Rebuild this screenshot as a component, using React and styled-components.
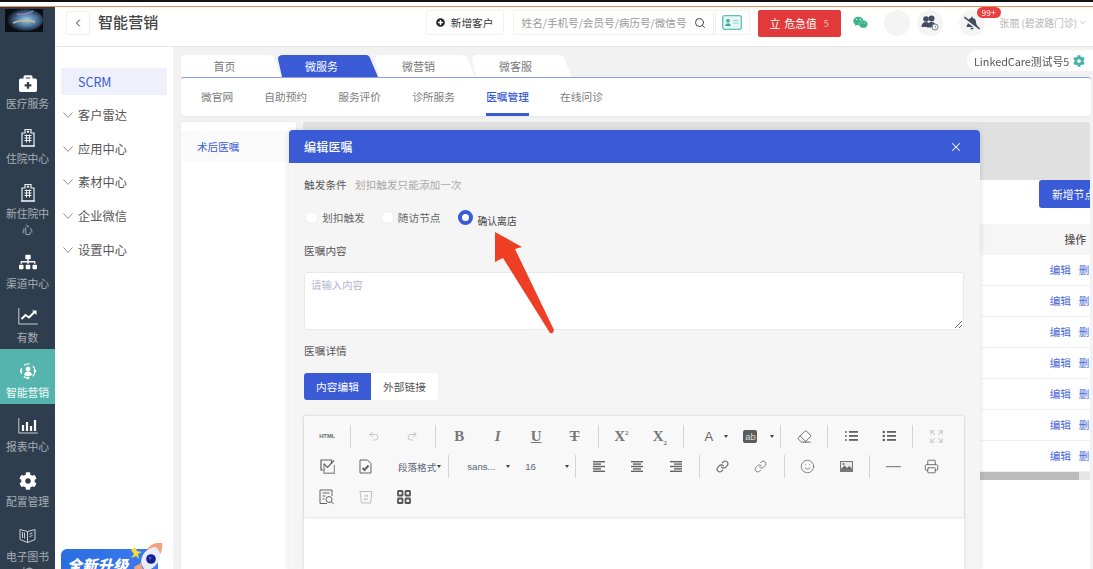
import React from 'react';
import styled, { createGlobalStyle } from 'styled-components';
import {
  Undo2, Redo2, Eraser, Expand, Link as LinkIcon, Smile, Printer, Search, ChevronLeft, ChevronDown, X,
} from 'lucide-react';
import {
  FaBriefcaseMedical, FaSitemap, FaCog, FaPlusCircle, FaWeixin, FaBellSlash,
} from 'react-icons/fa';

const FONT = `"Noto Sans CJK SC", "Noto Sans", sans-serif`;
const BLUE = '#3a5ad6';

const Global = createGlobalStyle`
  html, body { margin: 0; padding: 0; width: 1093px; height: 569px; overflow: hidden; background: #fff; }
  body { font-family: ${FONT}; }
  * { box-sizing: border-box; }
`;

const Screen = styled.div`
  position: relative; width: 1093px; height: 569px; display: flex; flex-direction: column; overflow: hidden;
  filter: blur(.35px);
`;
const TopEdge = styled.div`
  flex: 0 0 7px; background: #fff; border-top: 2px solid #111; border-bottom: 1.5px solid #e98d52;
`;
const Frame = styled.div`
  flex: 1; min-height: 0; display: flex;
`;

/* left rail */
const Rail = styled.nav`
  flex: 0 0 55px; background: #2f3e4e; display: flex; flex-direction: column; overflow: hidden;
`;
const LogoBox = styled.div`
  flex: 0 0 54px; padding: 2px 0 0 5px;
`;
const RailItem = styled.div`
  flex: 0 0 auto; min-height: ${p => p.$h || 54.6}px; padding-top: 13px;
  display: flex; flex-direction: column; align-items: center;
  background: ${p => (p.$active ? '#55b5ae' : 'transparent')};
  color: ${p => (p.$active ? '#f2fbfa' : '#a6afb8')};
`;
const RailIcon = styled.div`
  height: 18px; display: flex; align-items: center; justify-content: center; color: #fff; font-size: 18px;
`;
const RailLabel = styled.div`
  margin-top: 3.4px; font-size: 10.8px; line-height: 16px; text-align: center; width: 46px; word-break: break-all;
`;

/* right side */
const Main = styled.div`
  flex: 1; min-width: 0; display: flex; flex-direction: column; background: #f2f2f2;
`;
const Header = styled.header`
  flex: 0 0 39px; background: #fff; display: flex; align-items: center; padding: 0 6px 8px 11px;
  box-shadow: 0 1px 1px rgba(0,0,0,.04);
`;
const BackButton = styled.button`
  width: 24px; height: 24px; padding: 0; background: #fff; border: 1px solid #f0f0f0; border-radius: 2px;
  display: flex; align-items: center; justify-content: center; color: #333;
`;
const Title = styled.h1`
  margin: 0 0 2px 8px; font-size: 15px; line-height: 22px; font-weight: 500; color: #444; letter-spacing: .1px;
`;
const HeaderTools = styled.div`
  margin-left: auto; display: flex; align-items: center;
`;
const AddButton = styled.button`
  width: 78px; height: 25px; padding: 0; background: #fff; border: 1px solid #f2f2f2; border-radius: 2px;
  display: flex; align-items: center; justify-content: center; gap: 6px;
  font: 400 10.7px ${FONT}; color: #333;
`;
const SearchBox = styled.div`
  margin-left: 9px; width: 201px; height: 25px; background: #fff; border: 1px solid #f2f2f2;
  display: flex; align-items: center; justify-content: space-between; padding: 0 7px 0 8px;
  font-size: 10.6px; color: #9a9a9a; white-space: nowrap;
`;
const CardButton = styled.div`
  margin-left: 1px; width: 35px; height: 25px; background: #fff; border: 1px solid #f2f2f2;
  display: flex; align-items: center; justify-content: center;
`;
const AlertButton = styled.button`
  margin: 1px 0 0 8px; width: 83px; height: 27px; padding: 0; background: #e23a3a; border: 0; border-radius: 2px; color: #fff;
  display: flex; align-items: center; justify-content: center; font: 400 10.8px ${FONT};
`;
const AlertMark = styled.span`
  margin-right: 4px; font-size: 11px;
`;
const AlertCount = styled.span`
  margin-left: 7px; font-size: 9px; color: #f7c9c9;
`;
const WeChat = styled.div`
  margin-left: 12px; width: 15px; color: #37b48a; font-size: 15px; display: flex;
`;
const Circle = styled.div`
  position: relative; margin-left: ${p => p.$gap}px; width: 26px; height: 26px; border-radius: 50%; background: #f4f4f4;
  display: flex; align-items: center; justify-content: center; color: #434e5e; font-size: ${p => p.$size || 13}px;
`;
const Badge = styled.span`
  position: absolute; left: 18px; top: -3px; width: 24px; height: 11px; border-radius: 6px; background: #e84040; color: #fff;
  font-size: 8.4px; line-height: 11px; text-align: center;
`;
const UserName = styled.div`
  margin-left: 15px; font-size: 9.8px; color: #b5b5b5; display: flex; align-items: center; gap: 1px; white-space: nowrap;
`;

const Body = styled.div`
  flex: 1; min-height: 0; display: flex; margin-top: 1px;
`;
const SubNav = styled.aside`
  flex: 0 0 118px; background: #fff; padding: 21px 6px 0; display: flex; flex-direction: column; overflow: visible;
`;
const ScrmItem = styled.div`
  height: 27px; background: #eef1fb; color: ${BLUE}; font-size: 12.5px; line-height: 27px; padding-left: 17px; margin-bottom: 3px;
`;
const SubItem = styled.div`
  height: 33.8px; display: flex; align-items: center; gap: 5px; padding-left: 2px; color: #555; font-size: 12.2px; letter-spacing: .1px;
`;
const Promo = styled.div`
  position: relative; flex: 0 0 30px; margin: auto 9px -12px 0; background: linear-gradient(90deg, #2a6de0, #3c7cf0); border-radius: 6px;
  color: #fff; font-weight: 900; font-style: italic; font-size: 15px; line-height: 32px; padding-left: 6px; letter-spacing: .3px;
`;
const Rocket = styled.svg`
  position: absolute; right: -7px; top: -6px;
`;

const Content = styled.div`
  position: relative; flex: 1; min-width: 0; padding: 8px 3px 0 8px; display: flex; flex-direction: column;
`;
const TabRow = styled.div`
  flex: 0 0 22px; display: flex;
`;
const Tab = styled.div`
  flex: 0 0 100px; height: 22px; margin-right: -3px; text-align: center; padding-right: 13px;
  font-size: 11px; line-height: 22px;
  color: ${p => (p.$active ? '#fff' : '#777')};
  background: ${p => (p.$active ? BLUE : '#fff')};
  clip-path: ${p => (p.$first
    ? `path('M0 4 Q0 0 4 0 H89 Q92 0 93 3 L100 22 H0 Z')`
    : `path('M0 4 Q0 0 5 0 H88 Q91 0 92 3 L100 22 H4 Z')`)};
`;
const StoreSwitch = styled.div`
  position: absolute; right: 0; top: 3px; width: 126px; height: 21px; background: #fff; border-radius: 11px 0 0 11px;
  display: flex; align-items: center; padding-left: 7px; gap: 4px; font-size: 10.8px; color: #555; white-space: nowrap;
`;
const NavCard = styled.div`
  flex: 0 0 39px; margin-right: -1px; background: #fff; border-top: 1px solid #8a9de6; border-radius: 3px 3px 4px 4px;
  display: flex; gap: 31.2px; padding-left: 20px; box-shadow: 0 1px 2px rgba(0,0,0,.05);
`;
const NavLink = styled.div`
  height: 38px; line-height: 37px; font-size: 10.7px; white-space: nowrap;
  color: ${p => (p.$active ? BLUE : '#7b7b7b')};
  border-bottom: 3px solid ${p => (p.$active ? BLUE : 'transparent')};
  font-weight: ${p => (p.$active ? 500 : 400)};
`;
const Workspace = styled.div`
  position: relative; flex: 1; min-height: 0; margin-top: 6px; display: flex; gap: 7px;
`;
const TreePanel = styled.div`
  flex: 0 0 115px; background: #fff; border-radius: 3px 3px 0 0; padding-top: 9px; box-shadow: 0 0 3px rgba(0,0,0,.06);
`;
const TreeItem = styled.div`
  height: 31px; background: #fafafa; color: ${BLUE}; font-size: 10.6px; line-height: 31px; padding-left: 16px;
`;
const ListPanel = styled.div`
  flex: 1; min-width: 0; background: #fff; overflow: hidden; border-radius: 3px 3px 0 0; display: flex; flex-direction: column;
`;
const DimBand = styled.div`
  flex: 0 0 58px; background: #e0e0e0;
`;
const ActionBar = styled.div`
  flex: 0 0 44px; display: flex; justify-content: flex-end; margin-right: -14px;
`;
const NewNode = styled.button`
  width: 65px; height: 28px; padding: 0 0 0 13px; border: 0; border-radius: 3px; background: ${BLUE}; color: #fff;
  font: 400 10.8px ${FONT}; white-space: nowrap; text-align: left;
`;
const TableHead = styled.div`
  flex: 0 0 31px; background: #f6f6f6; display: flex; justify-content: flex-end; padding-right: 4px;
  font-size: 10.8px; font-weight: 500; line-height: 30px; color: #555;
`;
const TableRow = styled.div`
  flex: 0 0 30.7px; display: flex; justify-content: flex-end; gap: 8px; margin-right: -10px; border-bottom: 1px solid #f1f1f1;
  font-size: 10.6px; line-height: 30px; color: #4a68d8; white-space: nowrap;
`;
const ScrollTrack = styled.div`
  flex: 0 0 8px; background: #e6e6e6; padding-right: 11px;
`;
const ScrollThumb = styled.div`
  height: 100%; background: #bcbcbc;
`;

/* modal */
const Modal = styled.section`
  position: absolute; left: 108px; top: 8px; bottom: 0; width: 691px; background: #f5f5f5; border-radius: 4px 4px 0 0;
  box-shadow: 0 1px 6px rgba(0,0,0,.14); overflow: hidden; display: flex; flex-direction: column;
`;
const ModalHead = styled.div`
  flex: 0 0 33px; background: ${BLUE}; color: #fff; display: flex; align-items: center; justify-content: space-between;
  padding: 0 17px 0 15px; font-size: 12px; font-weight: 500; letter-spacing: .2px;
`;
const ModalBody = styled.div`
  flex: 1; min-height: 0; padding: 14px 16px 0 15px; display: flex; flex-direction: column;
`;
const FieldLabel = styled.div`
  flex: 0 0 16px; margin-top: ${p => p.$top || 0}px; display: flex; gap: 8px; font-size: 10.7px; line-height: 16px; color: #555;
`;
const Hint = styled.span`
  color: #a8a8a8;
`;
const RadioRow = styled.div`
  flex: 0 0 16px; margin-top: 13px; padding-left: 1px; display: flex; align-items: center;
`;
const Radio = styled.span`
  flex: 0 0 auto; width: ${p => (p.$on ? 15 : 13)}px; height: ${p => (p.$on ? 15 : 13)}px; border-radius: 50%; background: #fff;
  border: ${p => (p.$on ? `4.5px solid ${BLUE}` : '1px solid #efefef')}; margin-left: ${p => p.$gap || 0}px;
`;
const RadioText = styled.span`
  margin-left: 4px; font-size: 10.7px; line-height: 16px; color: #666; white-space: nowrap;
`;
const RadioTextOn = styled.span`
  margin: 7px 0 0 5px; font-size: 9.8px; line-height: 16px; color: #444; white-space: nowrap;
`;
const TextBox = styled.textarea`
  flex: 0 0 58px; margin-top: 13px; display: block; width: 100%; border: 1px solid #e8e8e8; border-radius: 3px; background: #fff;
  padding: 4px 6px; font: 400 10.4px ${FONT}; resize: vertical; outline: none;
  &::placeholder { color: #b4b6cf; opacity: 1; }
`;
const Segment = styled.div`
  flex: 0 0 27px; margin-top: 14px; display: flex; width: 134px;
`;
const SegmentButton = styled.div`
  flex: 1; text-align: center; font-size: 10.7px; line-height: 27px;
  background: ${p => (p.$on ? BLUE : '#fff')}; color: ${p => (p.$on ? '#fff' : '#555')};
  border-radius: ${p => (p.$on ? '3px 0 0 3px' : '0 3px 3px 0')};
`;
const Editor = styled.div`
  flex: 1; margin-top: 16px; background: #fff; box-shadow: 0 0 3px rgba(0,0,0,.14); display: flex; flex-direction: column;
`;
const Toolbar = styled.div`
  flex: 0 0 101px; background: #f8f8f8; padding: 5px 0 0 4px; box-shadow: 0 1px 2px rgba(0,0,0,.12);
`;
const ToolRow = styled.div`
  height: 30.5px; display: flex; align-items: center;
`;
const Cell = styled.div`
  flex: 0 0 38.45px; height: 24px; display: flex; align-items: center; justify-content: center;
  color: ${p => (p.$off ? '#bdbdbd' : '#626262')};
`;
const Sep = styled.div`
  flex: 0 0 1px; height: 23px; margin: 0 3.7px; background: #d4d4d4;
`;
const Letter = styled.span`
  font: ${p => (p.$i ? 'italic 700' : '700')} 15px "Liberation Serif", serif; color: #777;
  text-decoration: ${p => p.$deco || 'none'};
`;
const Script = styled.sub`
  font-size: 7px; vertical-align: ${p => (p.$up ? 'super' : 'sub')}; line-height: 0;
`;
const HtmlMark = styled.span`
  font: 700 5.8px "Liberation Sans", sans-serif; color: #666;
`;
const Drop = styled.div`
  flex: 0 0 ${p => p.$w}px; height: 24px; padding-left: ${p => p.$pad}px; padding-right: ${p => p.$right || 3}px;
  display: flex; align-items: center; justify-content: space-between;
  font: 400 ${p => p.$size || 9.6}px "Liberation Sans", ${FONT}, sans-serif; color: #5c6475; white-space: nowrap;
`;
const Caret = styled.span`
  width: 0; height: 0; border-left: 2.5px solid transparent; border-right: 2.5px solid transparent; border-top: 3px solid #444;
`;
const AbMark = styled.span`
  width: 14px; height: 13px; border-radius: 2px; background: #5a5a5a; color: #ddd; font: 400 9.5px/13px "Liberation Sans", sans-serif; text-align: center;
`;
const ALetter = styled.span`
  font: 400 13px "Liberation Sans", sans-serif; color: #666;
`;

const Logo = () => (
  <svg width="38" height="23" viewBox="0 0 38 23">
    <defs>
      <radialGradient id="lg" cx="55%" cy="50%" r="55%">
        <stop offset="0" stopColor="#9fd0e8" />
        <stop offset=".5" stopColor="#4f7aa4" />
        <stop offset="1" stopColor="#10131c" />
      </radialGradient>
    </defs>
    <rect width="38" height="23" fill="#0b0d14" />
    <ellipse cx="20" cy="11" rx="18" ry="11" fill="url(#lg)" />
    <path d="M8 14c6-3 14-3 22-1" stroke="#d8b98a" strokeWidth="1.4" fill="none" />
    <path d="M12 5c4 1 10 0 16-3" stroke="#8e7fae" strokeWidth="1.6" fill="none" />
  </svg>
);

const HospitalIcon = () => (
  <svg width="16" height="19" viewBox="0 0 16 19" fill="none" stroke="#eef1f3" strokeWidth="1.2">
    <path d="M2 18V5h3V1.500h6V5h3v13z" />
    <path d="M8 2.500v2.500M6.800 3.700h2.400" />
    <path d="M4.500 7.500h7M4.500 10h7M4.500 12.500h7M6.500 6.500v8M9.500 6.500v8" strokeWidth="1" />
    <path d="M1 18h14" />
  </svg>
);

const ChartLineIcon = () => (
  <svg width="20" height="17" viewBox="0 0 20 17" fill="none">
    <path d="M.8 0v16h19" stroke="#c8cdd2" strokeWidth="1" />
    <path d="M3.500 11l4-4 3.500 2.500L17 3.500" stroke="#fff" strokeWidth="2" />
    <path d="M14 2.500h4.500V7z" fill="#fff" />
  </svg>
);

const ChartBarIcon = () => (
  <svg width="20" height="16" viewBox="0 0 20 16" fill="none">
    <path d="M.8 0v15h19" stroke="#c8cdd2" strokeWidth="1" />
    <path d="M5 7v6M9 4v9M13 8v5M17 2v11" stroke="#fff" strokeWidth="2.2" />
  </svg>
);

const SmartIcon = () => (
  <svg width="18" height="18" viewBox="0 0 18 18" fill="none">
    <circle cx="9" cy="9" r="7" stroke="#fff" strokeWidth="1.2" strokeDasharray="6 3.5" />
    <circle cx="9" cy="7" r="2.4" fill="#fff" />
    <path d="M5 13c.6-2.400 2-3.400 4-3.400s3.400 1 4 3.400c-2 1.500-6 1.500-8 0z" fill="#fff" />
    <circle cx="2" cy="9" r="1.3" fill="#fff" />
    <circle cx="16" cy="9" r="1.3" fill="#fff" />
    <circle cx="9" cy="16" r="1.3" fill="#fff" />
  </svg>
);

const BookIcon = () => (
  <svg width="17" height="17" viewBox="0 0 17 17" fill="none" stroke="#c9ced3" strokeWidth="1">
    <path d="M1 2.500l7.500 2 7.500-2v10l-7.500 3-7.500-3z" />
    <path d="M8.500 4.500v11M3.500 5v6M5.500 5.500v6M10.500 7l3-1M10.500 9.500l3-1" />
  </svg>
);

const IdCard = () => (
  <svg width="20" height="15" viewBox="0 0 20 15" fill="none">
    <rect x=".7" y=".7" width="18.6" height="13.6" rx="2" fill="#e6f6f4" stroke="#5cc0b6" strokeWidth="1.3" />
    <circle cx="6" cy="5.8" r="1.8" fill="#35a99d" />
    <path d="M3.200 11c.3-2 1.400-2.800 2.800-2.800s2.500.8 2.800 2.800z" fill="#35a99d" />
    <path d="M11 5.500h5.500M11 8h5.500" stroke="#8fd4cc" strokeWidth="1" />
  </svg>
);

const ClockedFriends = () => (
  <svg width="18" height="16" viewBox="0 0 18 16">
    <circle cx="5" cy="4" r="2.8" fill="#434e5e" />
    <circle cx="10.5" cy="3.6" r="3" fill="#434e5e" />
    <path d="M.5 12c0-3.500 2-5 4.500-5s3 1 3 5zM6 12.500c0-4 2-5.500 4.500-5.500s4 1 4 4l-3 1.500z" fill="#434e5e" />
    <circle cx="14" cy="12" r="3" fill="#f4f4f4" stroke="#77808c" strokeWidth="1" />
    <path d="M14 10.500V12l1 .7" stroke="#77808c" strokeWidth=".8" fill="none" />
  </svg>
);

const RocketArt = () => (
  <Rocket width="38" height="30" viewBox="0 0 38 30">
    <path d="M8 4l2 4 5 1-4 2 1 5-3-3-5 2 3-4-3-4z" fill="#f4dc3a" />
    <path d="M20 6c4-5 10-7 15-6 1 6-1 12-6 16z" fill="#f2a27c" />
    <path d="M14 20c0-9 6-15 14-16 4 2 6 6 5 11-3 8-9 12-15 13z" fill="#e9edfb" />
    <circle cx="24" cy="16" r="4.8" fill="#13208c" />
    <circle cx="23" cy="15" r="1.5" fill="#3d55d8" />
    <path d="M14 20l-7 4 1 6h9z" fill="#f0a47e" />
  </Rocket>
);

const ThinChevron = () => (
  <svg width="10" height="6" viewBox="0 0 10 6" fill="none" stroke="#8f8f8f" strokeWidth="1">
    <path d="M.5.500L5 5.400 9.500.500" />
  </svg>
);

/* toolbar drawings */
const AlignLines = ({ mode }) => {
  const long = 12;
  const rows = [0, 1, 2, 3, 4].map(i => {
    const w = i % 2 === 0 ? long : 8;
    const x = mode === 'left' ? 1 : mode === 'right' ? 13 - w : 7 - w / 2;
    return <rect key={i} x={x} y={1 + i * 2.4} width={w} height="1.4" fill="currentColor" />;
  });
  return <svg width="14" height="13" viewBox="0 0 14 13">{rows}</svg>;
};
const ListMark = ({ ordered }) => (
  <svg width="14" height="12" viewBox="0 0 14 12" fill="currentColor">
    {[1, 5, 9].map(y => (
      <React.Fragment key={y}>
        {ordered
          ? <rect x="1.2" y={y} width="1.4" height="2" />
          : <circle cx="1.8" cy={y + 1} r="1.3" />}
        <rect x="5" y={y} width="9" height="1.8" />
      </React.Fragment>
    ))}
  </svg>
);
const DoubleCheck = () => (
  <svg width="15" height="15" viewBox="0 0 15 15" fill="none" stroke="currentColor" strokeWidth="1.2">
    <path d="M11.500 5v-4h-10.500v10h4" />
    <path d="M4 4.500v9.800h10.400V6" stroke="#999" strokeWidth="1.4" />
    <path d="M4 5l3.500 3.500L14 1.500" />
  </svg>
);
const DocPin = () => (
  <svg width="13" height="15" viewBox="0 0 13 15" fill="none" stroke="currentColor" strokeWidth="1">
    <path d="M1 1h7.500L12 4.500V14H1z" />
    <path d="M3.500 9l2 2 4-4.500" strokeWidth="2" />
  </svg>
);
const DocSearch = () => (
  <svg width="16" height="16" viewBox="0 0 16 16" fill="none" stroke="currentColor" strokeWidth="1">
    <path d="M8 14.500H1V1h12v6" />
    <path d="M3.500 4h7M3.500 7h3M3.500 10h2" />
    <circle cx="10" cy="10.5" r="3" />
    <path d="M12 12.700l2.800 2.300" />
  </svg>
);
const SwapBin = () => (
  <svg width="14" height="14" viewBox="0 0 14 14" fill="none" stroke="currentColor" strokeWidth="1">
    <path d="M1 1.500h12l-1.500 11.500h-9z" />
    <path d="M5 6h4l-1.500-1.300M9 9H5l1.500 1.300" />
  </svg>
);
const Blocks = () => (
  <svg width="14" height="14" viewBox="0 0 14 14" fill="none" stroke="#555" strokeWidth="1.8">
    <rect x="1" y="1" width="4.5" height="4.5" rx=".6" />
    <rect x="8.5" y="1" width="4.5" height="4.5" rx=".6" />
    <rect x="1" y="8.5" width="4.5" height="4.5" rx=".6" />
    <rect x="8.5" y="8.5" width="4.5" height="4.5" rx=".6" />
  </svg>
);
const PictureMark = () => (
  <svg width="13" height="11" viewBox="0 0 13 11">
    <rect width="13" height="11" fill="#777" />
    <rect x="1" y="1" width="11" height="7" fill="#e8e8e8" />
    <path d="M1 8l3.500-3.500L7 7l2.500-2L12 8z" fill="#666" />
    <circle cx="3.5" cy="3" r="1" fill="#666" />
  </svg>
);

const rail = [
  { label: '医疗服务', icon: <FaBriefcaseMedical /> },
  { label: '住院中心', icon: <HospitalIcon /> },
  { label: '新住院中心', icon: <HospitalIcon />, h: 70 },
  { label: '渠道中心', icon: <FaSitemap /> },
  { label: '有数', icon: <ChartLineIcon /> },
  { label: '智能营销', icon: <SmartIcon />, active: true },
  { label: '报表中心', icon: <ChartBarIcon /> },
  { label: '配置管理', icon: <FaCog /> },
  { label: '电子图书馆', icon: <BookIcon />, h: 70 },
];

const I = { size: 15, strokeWidth: 1.5 };

const ArrowSvg = styled.svg`
  position: absolute; left: 490px; top: 232px;
`;
function Arrow() {
  return (
    <ArrowSvg width="70" height="105" viewBox="0 0 70 105">
      <path d="M5 0 L32 15 L25 17 L64 98 Q63 102 60 101 L13 26 L5 30 Z" fill="#ee3f24" />
    </ArrowSvg>
  );
}

export default function App() {
  return (
    <Screen>
      <Global />
      <TopEdge />
      <Frame>
        <Rail>
          <LogoBox><Logo /></LogoBox>
          {rail.map(r => (
            <RailItem key={r.label} $active={r.active} $h={r.h}>
              <RailIcon>{r.icon}</RailIcon>
              <RailLabel>{r.label}</RailLabel>
            </RailItem>
          ))}
        </Rail>
        <Main>
          <Header>
            <BackButton><ChevronLeft size={12} strokeWidth={2} /></BackButton>
            <Title>智能营销</Title>
            <HeaderTools>
              <AddButton><FaPlusCircle size={9} color="#222" />新增客户</AddButton>
              <SearchBox>姓名/手机号/会员号/病历号/微信号<Search size={12} color="#444" /></SearchBox>
              <CardButton><IdCard /></CardButton>
              <AlertButton><AlertMark>立</AlertMark>危急值<AlertCount>5</AlertCount></AlertButton>
              <WeChat><FaWeixin /></WeChat>
              <Circle $gap={16} />
              <Circle $gap={7}><ClockedFriends /></Circle>
              <Circle $gap={16} $size={16}><FaBellSlash /><Badge>99+</Badge></Circle>
              <UserName>张丽 (碧波路门诊)<ChevronDown size={9} /></UserName>
            </HeaderTools>
          </Header>
          <Body>
            <SubNav>
              <ScrmItem>SCRM</ScrmItem>
              {['客户雷达', '应用中心', '素材中心', '企业微信', '设置中心'].map(t => (
                <SubItem key={t}><ThinChevron />{t}</SubItem>
              ))}
              <Promo>全新升级<RocketArt /></Promo>
            </SubNav>
            <Content>
              <TabRow>
                <Tab $first>首页</Tab>
                <Tab $active>微服务</Tab>
                <Tab>微营销</Tab>
                <Tab>微客服</Tab>
              </TabRow>
              <StoreSwitch>LinkedCare测试号5<FaCog size={12} color="#43b5a9" /></StoreSwitch>
              <NavCard>
                <NavLink>微官网</NavLink>
                <NavLink>自助预约</NavLink>
                <NavLink>服务评价</NavLink>
                <NavLink>诊所服务</NavLink>
                <NavLink $active>医嘱管理</NavLink>
                <NavLink>在线问诊</NavLink>
              </NavCard>
              <Workspace>
                <TreePanel><TreeItem>术后医嘱</TreeItem></TreePanel>
                <ListPanel>
                  <DimBand />
                  <ActionBar><NewNode>新增节点</NewNode></ActionBar>
                  <TableHead>操作</TableHead>
                  {[0, 1, 2, 3, 4, 5, 6].map(i => (
                    <TableRow key={i}><span>编辑</span><span>删除</span></TableRow>
                  ))}
                  <ScrollTrack><ScrollThumb /></ScrollTrack>
                </ListPanel>
                <Modal>
                  <ModalHead>编辑医嘱<X size={14} strokeWidth={1.8} /></ModalHead>
                  <ModalBody>
                    <FieldLabel>触发条件<Hint>划扣触发只能添加一次</Hint></FieldLabel>
                    <RadioRow>
                      <Radio /><RadioText>划扣触发</RadioText>
                      <Radio $gap={16} /><RadioText>随访节点</RadioText>
                      <Radio $gap={17} $on /><RadioTextOn>确认离店</RadioTextOn>
                    </RadioRow>
                    <FieldLabel $top={14}>医嘱内容</FieldLabel>
                    <TextBox placeholder="请输入内容" />
                    <FieldLabel $top={13}>医嘱详情</FieldLabel>
                    <Segment>
                      <SegmentButton $on>内容编辑</SegmentButton>
                      <SegmentButton>外部链接</SegmentButton>
                    </Segment>
                    <Editor>
                      <Toolbar>
                        <ToolRow>
                          <Cell><HtmlMark>HTML</HtmlMark></Cell>
                          <Sep />
                          <Cell $off><Undo2 size={12} strokeWidth={1.8} /></Cell>
                          <Cell $off><Redo2 size={12} strokeWidth={1.8} /></Cell>
                          <Sep />
                          <Cell><Letter>B</Letter></Cell>
                          <Cell><Letter $i>I</Letter></Cell>
                          <Cell><Letter $deco="underline">U</Letter></Cell>
                          <Cell><Letter $deco="line-through">T</Letter></Cell>
                          <Sep />
                          <Cell><Letter>X<Script $up>2</Script></Letter></Cell>
                          <Cell><Letter>X<Script>2</Script></Letter></Cell>
                          <Sep />
                          <Drop $w={47} $pad={17} $right={6}><ALetter>A</ALetter><Caret /></Drop>
                          <Drop $w={42} $pad={9} $right={2}><AbMark>ab</AbMark><Caret /></Drop>
                          <Sep />
                          <Cell><Eraser {...I} /></Cell>
                          <Sep />
                          <Cell><ListMark ordered /></Cell>
                          <Cell><ListMark /></Cell>
                          <Sep />
                          <Cell $off><Expand {...I} /></Cell>
                        </ToolRow>
                        <ToolRow>
                          <Cell><DoubleCheck /></Cell>
                          <Cell><DocPin /></Cell>
                          <Drop $w={59} $pad={13}>段落格式<Caret /></Drop>
                          <Sep />
                          <Drop $w={62} $pad={15} $right={4}>sans...<Caret /></Drop>
                          <Drop $w={57} $pad={11} $right={2}>16<Caret /></Drop>
                          <Sep />
                          <Cell><AlignLines mode="left" /></Cell>
                          <Cell><AlignLines mode="center" /></Cell>
                          <Cell><AlignLines mode="right" /></Cell>
                          <Sep />
                          <Cell><LinkIcon size={13} strokeWidth={2} /></Cell>
                          <Cell><LinkIcon size={13} strokeWidth={1.4} /></Cell>
                          <Sep />
                          <Cell><Smile {...I} strokeWidth={1.2} /></Cell>
                          <Cell><PictureMark /></Cell>
                          <Sep />
                          <Cell><svg width="15" height="2"><rect width="15" height="1.2" fill="#888" /></svg></Cell>
                          <Cell><Printer {...I} strokeWidth={1.4} /></Cell>
                        </ToolRow>
                        <ToolRow>
                          <Cell><DocSearch /></Cell>
                          <Cell $off><SwapBin /></Cell>
                          <Cell><Blocks /></Cell>
                        </ToolRow>
                      </Toolbar>
                    </Editor>
                  </ModalBody>
                </Modal>
              </Workspace>
            </Content>
          </Body>
        </Main>
      </Frame>
      <Arrow />
    </Screen>
  );
}
